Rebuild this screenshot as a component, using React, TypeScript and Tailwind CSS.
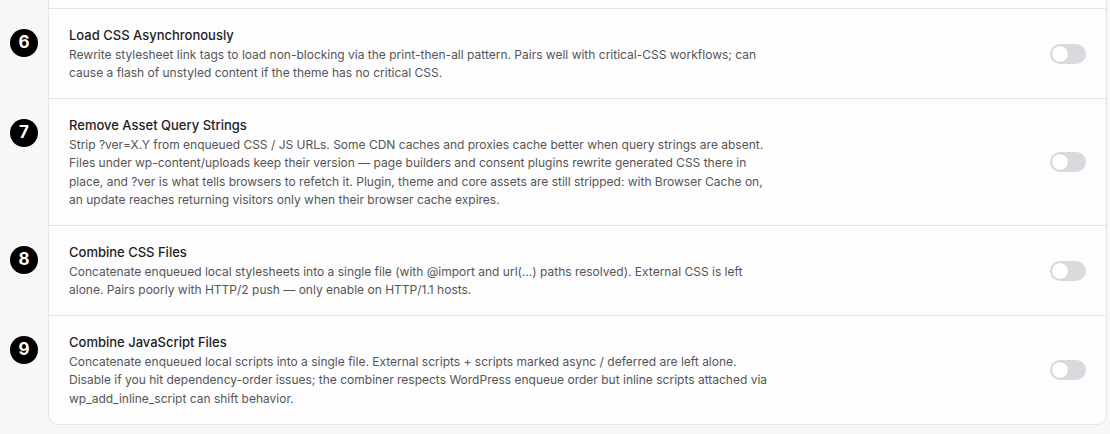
const settings = [
  {
    n: 6,
    title: "Load CSS Asynchronously",
    lines: [
      "Rewrite stylesheet link tags to load non-blocking via the print-then-all pattern. Pairs well with critical-CSS workflows; can",
      "cause a flash of unstyled content if the theme has no critical CSS.",
    ],
  },
  {
    n: 7,
    title: "Remove Asset Query Strings",
    lines: [
      "Strip ?ver=X.Y from enqueued CSS / JS URLs. Some CDN caches and proxies cache better when query strings are absent.",
      "Files under wp-content/uploads keep their version \u2014 page builders and consent plugins rewrite generated CSS there in",
      "place, and ?ver is what tells browsers to refetch it. Plugin, theme and core assets are still stripped: with Browser Cache on,",
      "an update reaches returning visitors only when their browser cache expires.",
    ],
  },
  {
    n: 8,
    title: "Combine CSS Files",
    lines: [
      "Concatenate enqueued local stylesheets into a single file (with @import and url(\u2026) paths resolved). External CSS is left",
      "alone. Pairs poorly with HTTP/2 push \u2014 only enable on HTTP/1.1 hosts.",
    ],
  },
  {
    n: 9,
    title: "Combine JavaScript Files",
    lines: [
      "Concatenate enqueued local scripts into a single file. External scripts + scripts marked async / deferred are left alone.",
      "Disable if you hit dependency-order issues; the combiner respects WordPress enqueue order but inline scripts attached via",
      "wp_add_inline_script can shift behavior.",
    ],
  },
];

const Toggle = () => (
  <div className="w-[36px] h-[20px] rounded-full bg-[#d9d9de] p-[2px] flex items-center shrink-0">
    <div className="w-[16px] h-[16px] rounded-full bg-white shadow-[0_0_0_0.5px_rgba(0,0,0,0.08)]" />
  </div>
);

export default function App() {
  return (
    <div className="w-[1110px] h-[434px] bg-[#f7f7f7] overflow-hidden font-['Inter','Liberation_Sans',sans-serif]">
      <div className="flex">
        <div className="w-[48px] shrink-0" />
        <div className="flex-1 mr-[3px] h-[8px] bg-[#fdfdfd] border-x border-[#e5e5e5]" />
      </div>
      {settings.map((item, i) => (
        <div key={item.n} className="flex">
          <div className="w-[48px] shrink-0 pt-[21px] pl-[10px]">
            <div className="w-[28px] h-[28px] rounded-full bg-black text-white flex items-center justify-center text-[17px] font-bold">
              {item.n}
            </div>
          </div>
          <div
            className={
              "flex-1 mr-[3px] bg-[#fdfdfd] border-x border-t border-[#e5e5e5] flex items-center pl-[20px] pr-[20px] pt-[15.5px] pb-[15.5px] " +
              (i === settings.length - 1 ? "border-b rounded-b-[10px]" : "")
            }
          >
            <div className="flex-1">
              <div className="text-[13px] leading-[20px] font-medium text-[#1d1d1f]">{item.title}</div>
              <div className="mt-[1px] text-[12px] leading-[18.5px] text-[#555558]">
                {item.lines.map((l, k) => (
                  <div key={k}>{l}</div>
                ))}
              </div>
            </div>
            <Toggle />
          </div>
        </div>
      ))}
    </div>
  );
}
